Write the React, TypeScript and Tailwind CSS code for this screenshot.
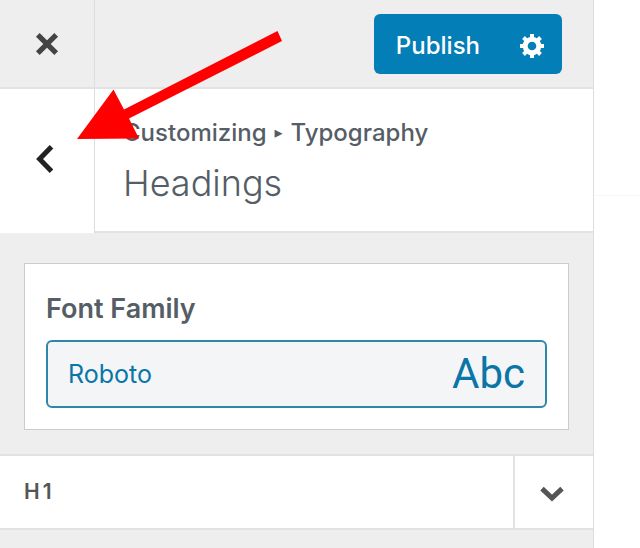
import React from "react";

function CloseIcon() {
  return (
    <svg width="24" height="24" viewBox="0 0 24 24" fill="none" stroke="#444" strokeWidth="5.2" aria-hidden="true">
      <path d="M2.8 2.8 21.2 21.2M21.2 2.8 2.8 21.2" />
    </svg>
  );
}

function BackIcon() {
  return (
    <svg width="18" height="28" viewBox="0 0 18 28" fill="none" stroke="#222" strokeWidth="5" aria-hidden="true">
      <path d="M15.5 1.8 3.6 14l11.9 12.2" />
    </svg>
  );
}

function ChevronDownIcon() {
  return (
    <svg width="24" height="16" viewBox="0 0 24 16" fill="none" stroke="#555" strokeWidth="5" aria-hidden="true">
      <path d="M2 2.6 12 12 22 2.6" />
    </svg>
  );
}

const teeth = [0, 45, 90, 135];

function GearIcon() {
  return (
    <svg width="24" height="24" viewBox="0 0 24 24" aria-hidden="true">
      <circle cx="12" cy="12" r="6.8" fill="none" stroke="#fff" strokeWidth="5" />
      {teeth.map((angle) => (
        <path
          key={angle}
          d="M10 0h4v5h-4zM10 19h4v5h-4z"
          fill="#fff"
          transform={`rotate(${angle} 12 12)`}
        />
      ))}
    </svg>
  );
}

function Header() {
  return (
    <header className="flex h-[89px] border-b-2 border-[#e2e2e2]">
      <button
        type="button"
        aria-label="Close"
        className="flex w-[95px] shrink-0 items-center justify-center border-r border-[#dddddd]"
      >
        <CloseIcon />
      </button>
      <div className="flex flex-1 items-center justify-end pr-[31px]">
        <div className="flex h-[60px] rounded-md bg-[#047eb6] text-white">
          <button type="button" className="pt-1 pr-[22px] pl-[22px] text-[24px] leading-8 font-medium">
            Publish
          </button>
          <button type="button" aria-label="Publish settings" className="flex w-[60px] items-center justify-center pt-1">
            <GearIcon />
          </button>
        </div>
      </div>
    </header>
  );
}

function SectionTitle() {
  return (
    <div className="flex h-[144px] bg-white">
      <button
        type="button"
        aria-label="Back"
        className="flex w-[95px] shrink-0 items-center justify-center border-r border-[#dddddd] pr-1 pb-1"
      >
        <BackIcon />
      </button>
      <div className="flex-1 border-b-2 border-[#e2e2e2] pt-7 pl-7 text-[#555d66]">
        <div className="flex items-center gap-2 text-[24px] leading-8 font-medium">
          <span>Customizing</span>
          <span className="font-['DejaVu_Sans',sans-serif] text-base font-normal">▸</span>
          <span>Typography</span>
        </div>
        <h1 className="pt-[10px] text-[36px] leading-[48px] font-light">Headings</h1>
      </div>
    </div>
  );
}

function FontFamilyCard() {
  return (
    <section className="mx-6 mt-[30px] mb-6 border border-[#cccccc] bg-white px-[21px] pt-7 pb-[21px]">
      <h2 id="font-family" className="text-[27px] leading-[34px] font-semibold text-[#555d66]">
        Font Family
      </h2>
      <button
        type="button"
        aria-describedby="font-family"
        className="mt-[14px] flex h-[68px] w-full items-center justify-between rounded-md border-2 border-[#3085ab] bg-[#f3f5f6] px-5 text-[#0b75a7]"
      >
        <span className="text-[25px] leading-8">Roboto</span>
        <span className="font-[Roboto,sans-serif] text-[42px] leading-[48px]">Abc</span>
      </button>
    </section>
  );
}

function HeadingRow() {
  return (
    <div className="flex h-[76px] border-y-2 border-[#e2e2e2] bg-white">
      <h3 className="flex flex-1 items-center pl-6 text-[21px] leading-7 font-semibold tracking-[3px] text-[#555555]">
        H1
      </h3>
      <button
        type="button"
        aria-label="Expand H1"
        className="flex w-[80px] items-center justify-center border-l-2 border-[#e2e2e2] pt-1 pr-1"
      >
        <ChevronDownIcon />
      </button>
    </div>
  );
}

function PointerArrow() {
  return (
    <svg
      className="pointer-events-none absolute top-[30px] left-[76px]"
      width="210"
      height="112"
      viewBox="76 30 210 112"
      aria-hidden="true"
    >
      <path d="M277.5 31 282 41 129 118.5 139 138.5 77 139 113.5 89.5 124 109.5Z" fill="#ff0000" />
    </svg>
  );
}

export default function App() {
  return (
    <div className="relative flex min-h-screen bg-white font-[Inter,sans-serif]">
      <aside className="flex-1 border-r border-[#dddddd] bg-[#eeeeee]">
        <Header />
        <SectionTitle />
        <FontFamilyCard />
        <HeadingRow />
      </aside>
      <main className="w-[46px] shrink-0 pt-[195px]">
        <hr className="border-[#f7f7f7]" />
      </main>
      <PointerArrow />
    </div>
  );
}
